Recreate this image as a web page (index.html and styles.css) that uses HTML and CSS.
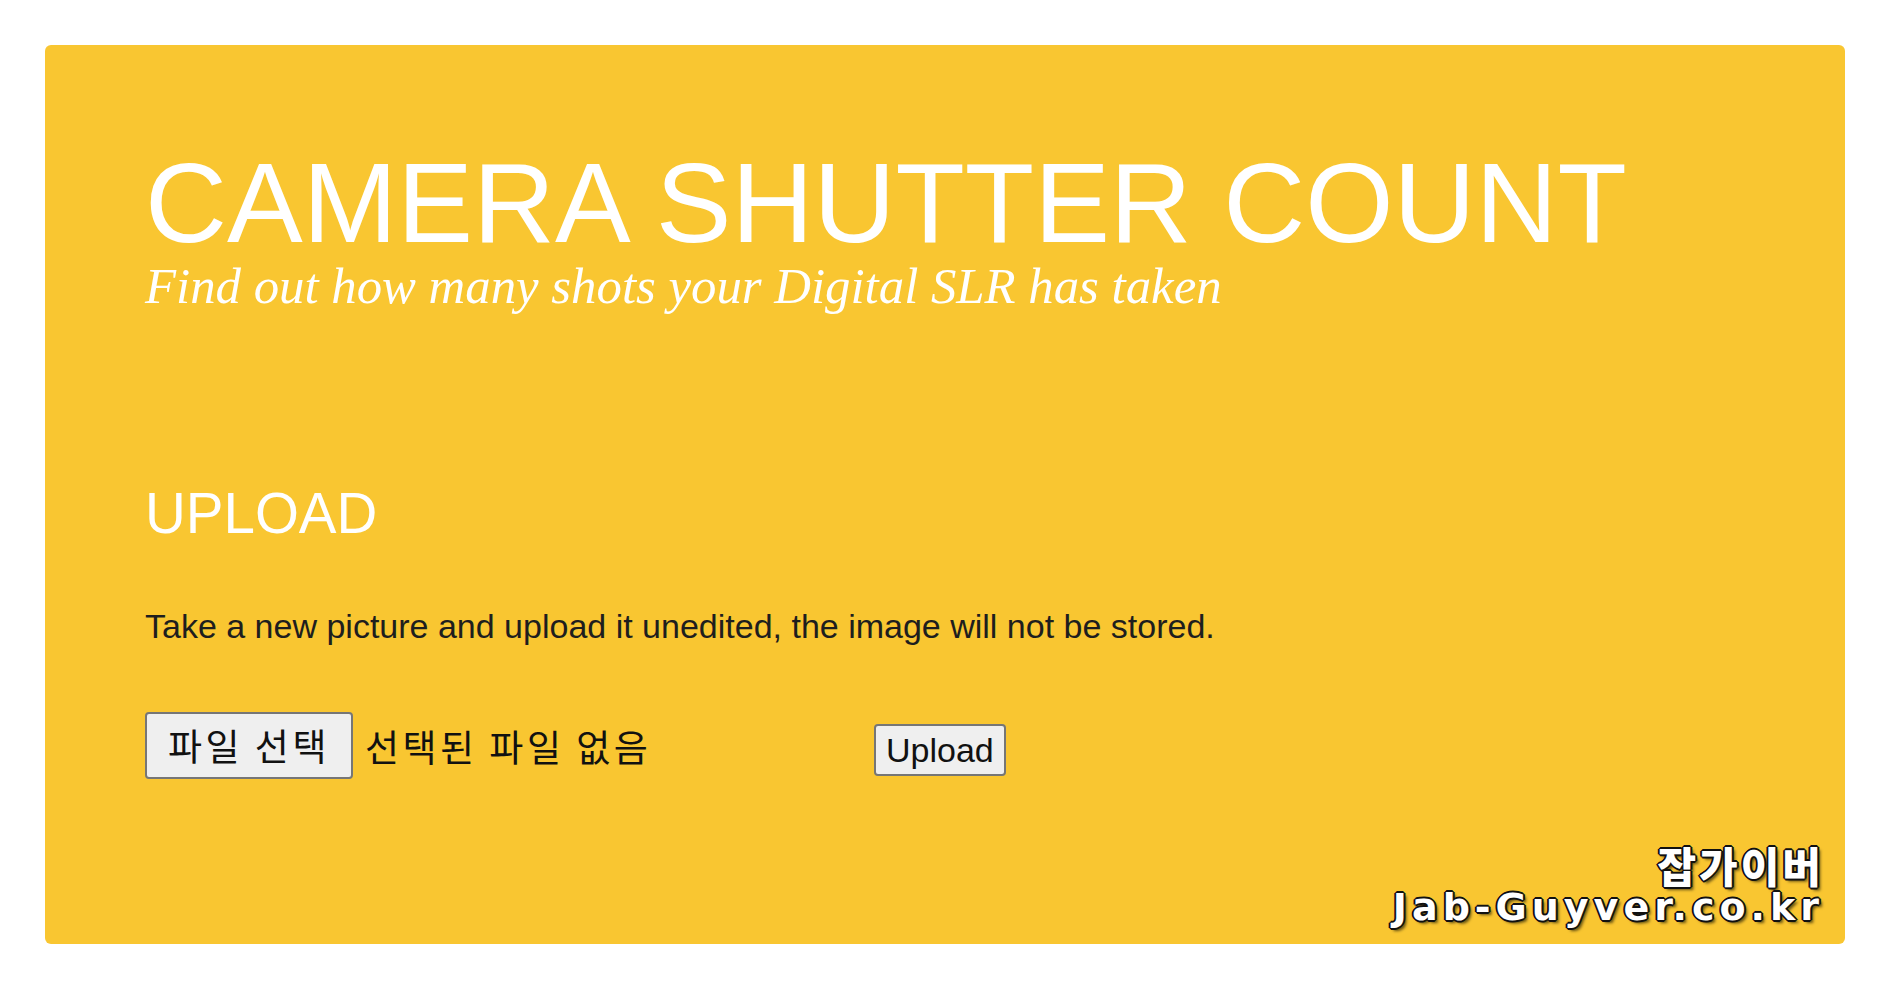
FILE: index.html
```html
<!DOCTYPE html>
<html>
	<head>
		<meta charset="UTF-8">
		<title>Camera Shutter Count</title>
		<link rel="stylesheet" href="styles.css">
	</head>
	<body>
		<div class="page">
			<div class="card">
				<header class="masthead">
					<h1 class="title">CAMERA SHUTTER COUNT</h1>
					<p class="tagline">Find out how many shots your Digital SLR has taken</p>
				</header>
				<section class="upload">
					<h2 class="upload-title">UPLOAD</h2>
					<p class="upload-note">Take a new picture and upload it unedited, the image will not be stored.</p>
					<form class="upload-form">
						<!-- 파일 선택 영역 -->
						<div class="file-field">
							<label class="file-btn">파일 선택</label>
							<span class="file-name">선택된 파일 없음</span>
						</div>
						<button type="button" class="submit-btn">Upload</button>
					</form>
				</section>
				<div class="stamp">
					<span class="stamp-ko">잡가이버</span>
					<span class="stamp-en">Jab-Guyver.co.kr</span>
				</div>
			</div>
		</div>
	</body>
</html>
```

FILE: styles.css
```css
*{
	padding: 0;
	margin: 0;
}
body{
	background: #fff;
	font-family: "Liberation Sans", Arial, sans-serif;
}
.page{
	padding: 45px;
}
.card{
	position: relative;
	box-sizing: border-box;
	height: 899px;
	padding: 108px 100px 0;
	background: #f9c631;
	border-radius: 6px;
}
.title{
	font-size: 113.5px;
	font-weight: normal;
	line-height: 100px;
	color: #fff;
	white-space: nowrap;
}
.tagline{
	margin-top: 3px;
	font-family: "Liberation Serif", "Times New Roman", serif;
	font-style: italic;
	font-size: 50.8px;
	line-height: 60px;
	color: #fff;
}
.upload{
	margin-top: 166px;
}
.upload-title{
	font-size: 56.5px;
	font-weight: normal;
	line-height: 64px;
	color: #fff;
}
.upload-note{
	margin-top: 61px;
	font-size: 34px;
	line-height: 38px;
	color: #1e1e1e;
}
.upload-form{
	display: flex;
	align-items: center;
	margin-top: 67px;
}
.file-field{
	display: flex;
	align-items: center;
	gap: 12px;
	width: 729px;
	font-family: "Noto Sans CJK KR", sans-serif;
	font-size: 37px;
	letter-spacing: 3.5px;
	color: #111;
}
.file-btn{
	padding: 10px 21px;
	line-height: 43px;
	background: #efefef;
	border: 2px solid #767676;
	border-radius: 4px;
}
.submit-btn{
	margin-top: 9px;
	padding: 5px 10px;
	font-family: "Liberation Sans", Arial, sans-serif;
	font-size: 34px;
	line-height: 38px;
	color: #111;
	background: #efefef;
	border: 2px solid #767676;
	border-radius: 4px;
}
/* 워터마크 */
.stamp{
	position: absolute;
	right: 21px;
	bottom: 16px;
	display: flex;
	flex-direction: column;
	align-items: flex-end;
	color: #fff;
	font-weight: bold;
	text-shadow: 2px 0 0 #111, -2px 0 0 #111, 0 2px 0 #111, 0 -2px 0 #111,
		1px 1px 0 #111, -1px -1px 0 #111, 1px -1px 0 #111, -1px 1px 0 #111,
		3px 3px 3px rgba(0,0,0,.6);
}
.stamp-ko{
	font-family: "Noto Sans CJK KR", sans-serif;
	font-weight: 900;
	font-size: 42px;
	line-height: 42px;
	letter-spacing: 3px;
}
.stamp-en{
	font-family: "DejaVu Sans", sans-serif;
	font-size: 38px;
	line-height: 42px;
	letter-spacing: 5px;
}
```
